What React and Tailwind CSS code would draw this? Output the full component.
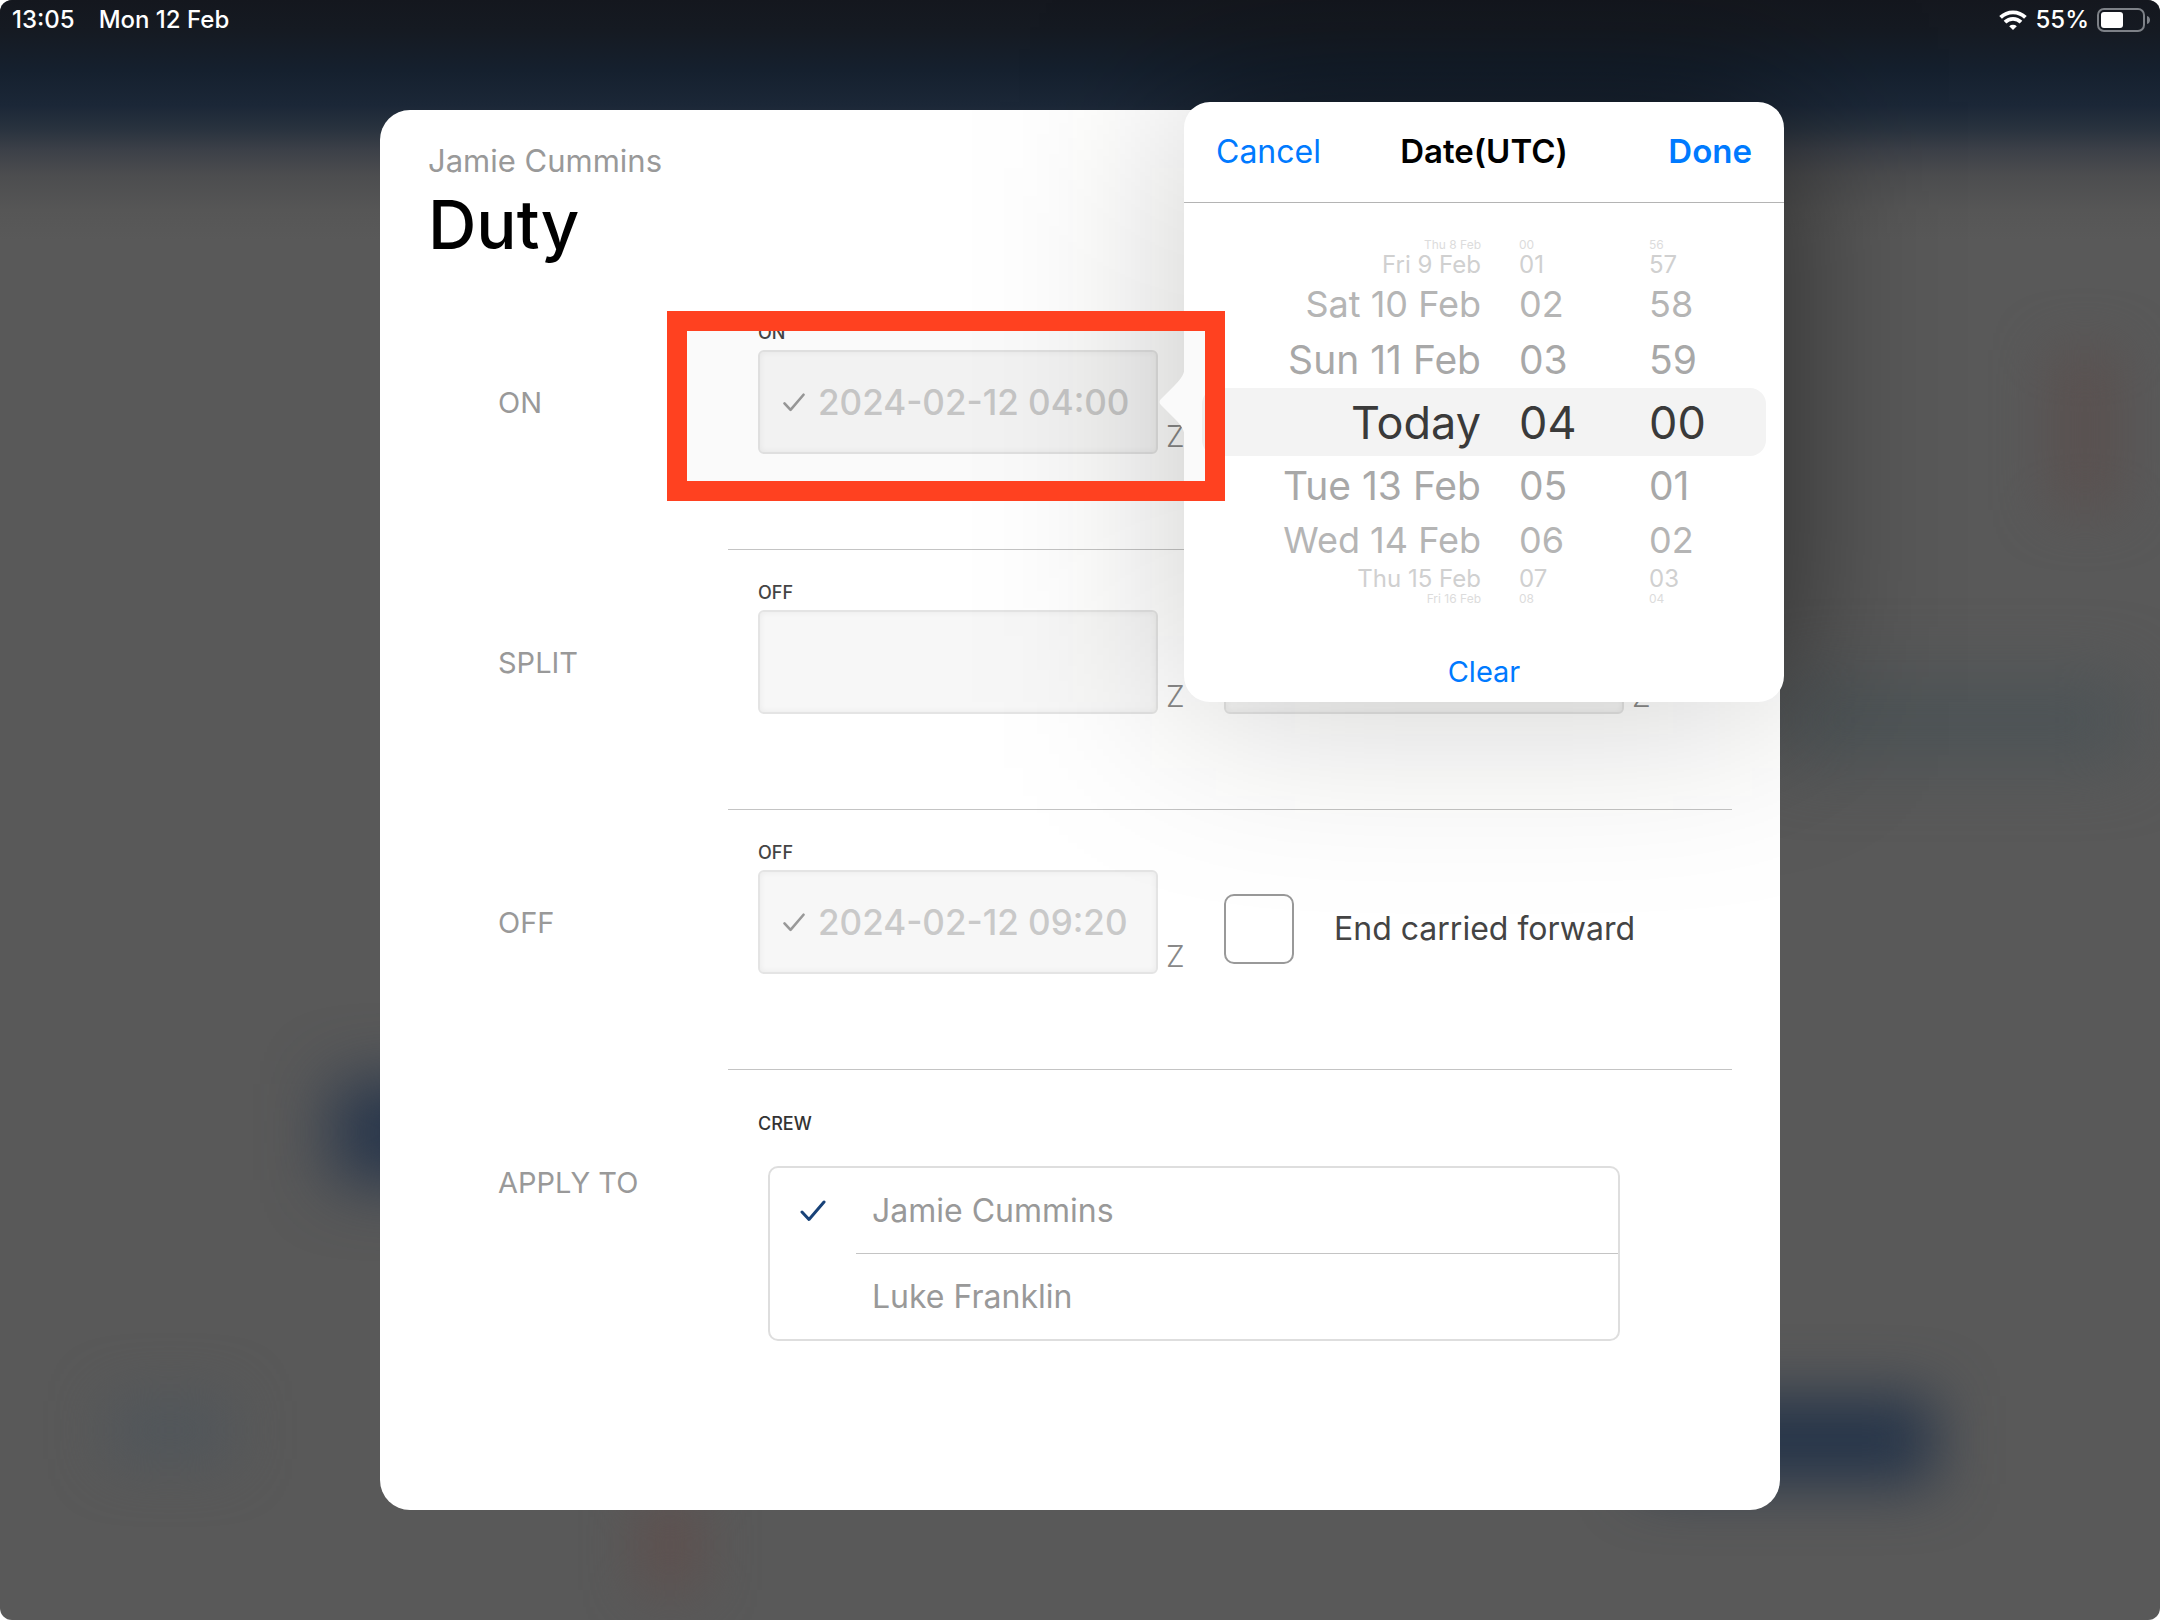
const WHEEL = [
  { day: 'Thu 8 Feb', hour: '00', minute: '56', className: 'h-[14px] text-[12px] text-[#dcdcdc]' },
  { day: 'Fri 9 Feb', hour: '01', minute: '57', className: 'h-[26px] text-[24px] text-[#d0d0d0]' },
  { day: 'Sat 10 Feb', hour: '02', minute: '58', className: 'h-[52px] text-[36px] text-[#b5b5b5]' },
  { day: 'Sun 11 Feb', hour: '03', minute: '59', className: 'h-[58px] text-[39px] text-[#a8a8a8]' },
  { day: 'Today', hour: '04', minute: '00', className: 'h-[68px] text-[45px] text-[#3a3a3a]' },
  { day: 'Tue 13 Feb', hour: '05', minute: '01', className: 'h-[58px] text-[39px] text-[#a8a8a8]' },
  { day: 'Wed 14 Feb', hour: '06', minute: '02', className: 'h-[52px] text-[36px] text-[#b5b5b5]' },
  { day: 'Thu 15 Feb', hour: '07', minute: '03', className: 'h-[26px] text-[24px] text-[#d0d0d0]' },
  { day: 'Fri 16 Feb', hour: '08', minute: '04', className: 'h-[14px] text-[12px] text-[#dcdcdc]' },
];

/* ── Icons ────────────────────────────────────────────────────────────────── */

function CheckIcon({ className }) {
  return (
    <svg viewBox="0 0 26 22" fill="none" stroke="currentColor" strokeWidth="3" strokeLinecap="round" strokeLinejoin="round" className={className} aria-hidden="true">
      <path d="M2 12 9 19.5 24 2" />
    </svg>
  );
}

function WifiIcon() {
  return (
    <svg viewBox="0 0 28 20" className="h-5 w-7" fill="none" stroke="white" strokeWidth="3.8" aria-hidden="true">
      <path d="M1.6 7.4a17.6 17.6 0 0 1 24.8 0" />
      <path d="M6 12.2a11.4 11.4 0 0 1 16 0" />
      <path d="M14 20 10.2 16.2a5.6 5.6 0 0 1 7.6 0z" fill="white" stroke="none" />
    </svg>
  );
}

function BatteryIcon() {
  return (
    <svg viewBox="0 0 54 24" className="h-6 w-[54px]" aria-hidden="true">
      <rect x="1" y="1" width="46" height="22" rx="6" fill="none" stroke="#7d8187" strokeWidth="2" />
      <rect x="4" y="4" width="22" height="16" rx="3" fill="white" />
      <path d="M50 8C54 9 54 15 50 16z" fill="#7d8187" />
    </svg>
  );
}

/* ── Backdrop ─────────────────────────────────────────────────────────────── */

function Backdrop() {
  return (
    <div className="absolute inset-0 overflow-hidden bg-[#595959]" aria-hidden="true">
      <div className="absolute inset-x-0 top-0 h-[240px] bg-[linear-gradient(#14171e_0px,#151a22_30px,#15202e_70px,#1b2737_105px,#28323e_128px,#3c4048_150px,#4c4d4f_175px,#565656_210px,#595959_240px)]" />
      <div className="absolute top-[1084px] left-[335px] h-[96px] w-[200px] bg-[#22324a] blur-[34px]" />
      <div className="absolute top-[1396px] left-[1640px] h-[88px] w-[294px] bg-[#253449] blur-[30px]" />
      <div className="absolute top-[1400px] left-[110px] h-[60px] w-[120px] bg-[#50565b] blur-[28px]" />
      <div className="absolute top-[1500px] left-[640px] h-[90px] w-[60px] bg-[#5e504e] blur-[26px]" />
      <div className="absolute top-[350px] left-[2050px] h-[160px] w-[70px] bg-[#5a5150] blur-[26px]" />
      <div className="absolute top-[680px] left-[1780px] h-[80px] w-[350px] bg-[#4c5356] blur-[34px]" />
      <div className="absolute top-[102px] left-[1184px] h-[600px] w-[600px] bg-black/54 blur-[80px]" />
    </div>
  );
}

function StatusBar() {
  return (
    <header className="relative flex h-10 items-center justify-between pr-[9px] pl-3 text-[24px] font-medium text-white">
      <div className="flex gap-6">
        <span>13:05</span>
        <span>Mon 12 Feb</span>
      </div>
      <div className="flex items-center gap-2">
        <WifiIcon />
        <span>55%</span>
        <BatteryIcon />
      </div>
    </header>
  );
}

/* ── Form ─────────────────────────────────────────────────────────────────── */

function DateField({ id, label, value = '' }) {
  return (
    <div className="flex w-[466px] flex-col">
      <label htmlFor={id} className="h-[30px] text-[18px] leading-[26px] font-medium text-[#444]">{label}</label>
      <div className="flex items-end gap-2">
        <div className="flex h-[104px] w-[400px] items-center gap-3 rounded-md border-2 border-[#e4e4e4] bg-[#f7f7f7] pl-[22px] shadow-[inset_0_0_6px_rgba(0,0,0,0.06)]">
          {value && <CheckIcon className="h-[19px] w-6 shrink-0 text-[#999]" />}
          <input id={id} type="text" readOnly value={value} className="w-full min-w-0 bg-transparent text-[35px] font-medium text-[#c9c9c9] outline-none" />
        </div>
        <span className="text-[30px] leading-9 font-light text-[#888]">Z</span>
      </div>
    </div>
  );
}

function FormRow({ title, children }) {
  return (
    <section className="flex h-[260px]">
      <h2 className="w-[300px] shrink-0 pt-[93px] pl-[70px] text-[29px] leading-10 text-[#999]">{title}</h2>
      <div className="flex grow border-b border-[#c4c4c4] pt-[30px] pl-[30px]">{children}</div>
    </section>
  );
}

function CrewOption({ name, checked = false }) {
  return (
    <label className="flex h-[85px] items-center">
      <input type="checkbox" defaultChecked={checked} className="peer sr-only" />
      <span className="flex w-[86px] shrink-0 justify-center text-transparent peer-checked:text-[#184278]">
        <CheckIcon className="h-[22px] w-[26px]" />
      </span>
      <span className="grow pl-4">{name}</span>
    </label>
  );
}

function DutyDialog() {
  return (
    <main className="relative mx-auto mt-[70px] min-h-[1400px] w-[1400px] rounded-[30px] bg-white px-12 pt-[30px]">
      <p className="text-[31px] leading-[42px] text-[#999]">Jamie Cummins</p>
      <h1 className="h-[108px] text-[67px] leading-[86px] font-medium text-black">Duty</h1>

      <FormRow title="ON">
        <DateField id="on" label="ON" value="2024-02-12 04:00" />
      </FormRow>
      <FormRow title="SPLIT">
        <DateField id="split-off" label="OFF" />
        <DateField id="split-on" label="ON" />
      </FormRow>
      <FormRow title="OFF">
        <DateField id="off" label="OFF" value="2024-02-12 09:20" />
        <label className="mt-[54px] flex h-[70px] items-center gap-10 text-[32px] text-[#444]">
          <input type="checkbox" className="size-[70px] appearance-none rounded-[10px] border-2 border-[#999] bg-white" />
          End carried forward
        </label>
      </FormRow>

      <section className="flex">
        <h2 className="w-[300px] shrink-0 pt-[93px] pl-[70px] text-[29px] leading-10 text-[#999]">APPLY TO</h2>
        <fieldset className="grow pr-[112px] pl-10">
          <legend className="-ml-[10px] pt-[42px] text-[18px] leading-6 font-medium text-[#333]">CREW</legend>
          <div className="mt-[30px] rounded-[10px] border-2 border-[#dedede] text-[32px] text-[#999]">
            <CrewOption name="Jamie Cummins" checked />
            <hr className="ml-[86px] border-[#c4c4c4]" />
            <CrewOption name="Luke Franklin" />
          </div>
        </fieldset>
      </section>

      <DatePopover />

      {/* Highlight around the field being edited */}
      <div className="pointer-events-none absolute top-[201px] left-[287px] h-[190px] w-[558px] border-20 border-[#ff4120] bg-black/2" />
    </main>
  );
}

/* ── Date picker ──────────────────────────────────────────────────────────── */

function DatePopover() {
  return (
    <>
      {/* The shadow is clipped to the dialog's rounded edge */}
      <div className="pointer-events-none absolute inset-0 overflow-hidden rounded-[30px]">
        <div className="absolute -top-2 left-[804px] size-[600px] bg-[#14140a]/22 blur-[100px]" />
      </div>

      <div role="dialog" aria-label="Date(UTC)" className="absolute -top-2 left-[804px] flex h-[600px] w-[600px] flex-col rounded-[26px] bg-white">
        <svg viewBox="0 0 26 76" className="absolute top-[262px] -left-[25px] h-[76px] w-[26px]" fill="white" aria-hidden="true">
          <path d="M26 0C26 10 22 15 16 21L2 35Q-1 38 2 41L16 55C22 61 26 66 26 76z" />
        </svg>

        <div className="grid h-[101px] grid-cols-[1fr_auto_1fr] items-center border-b border-[#b4b4b4] px-8 text-[33px]">
          <button type="button" className="justify-self-start text-[32px] text-[#007aff]">Cancel</button>
          <h2 className="font-semibold text-black">Date(UTC)</h2>
          <button type="button" className="justify-self-end font-semibold text-[#007aff]">Done</button>
        </div>

        <div className="mx-[18px] mt-[35px] leading-none">
          {WHEEL.map((row) => (
            <div key={row.day} className={`grid grid-cols-[279px_130px_1fr] items-center ${row.day === 'Today' ? 'rounded-2xl bg-[#f3f3f3]' : ''} ${row.className}`}>
              <span className="text-right">{row.day}</span>
              <span className="pl-[38px]">{row.hour}</span>
              <span className="pl-[38px]">{row.minute}</span>
            </div>
          ))}
        </div>

        <button type="button" className="mx-auto mt-[46px] text-[29px] leading-10 text-[#007aff]">Clear</button>
      </div>
    </>
  );
}

export default function App() {
  return (
    <div className="bg-white font-['Inter',sans-serif]">
      <div className="relative min-h-screen overflow-hidden rounded-[12px]">
        <Backdrop />
        <StatusBar />
        <DutyDialog />
      </div>
    </div>
  );
}
